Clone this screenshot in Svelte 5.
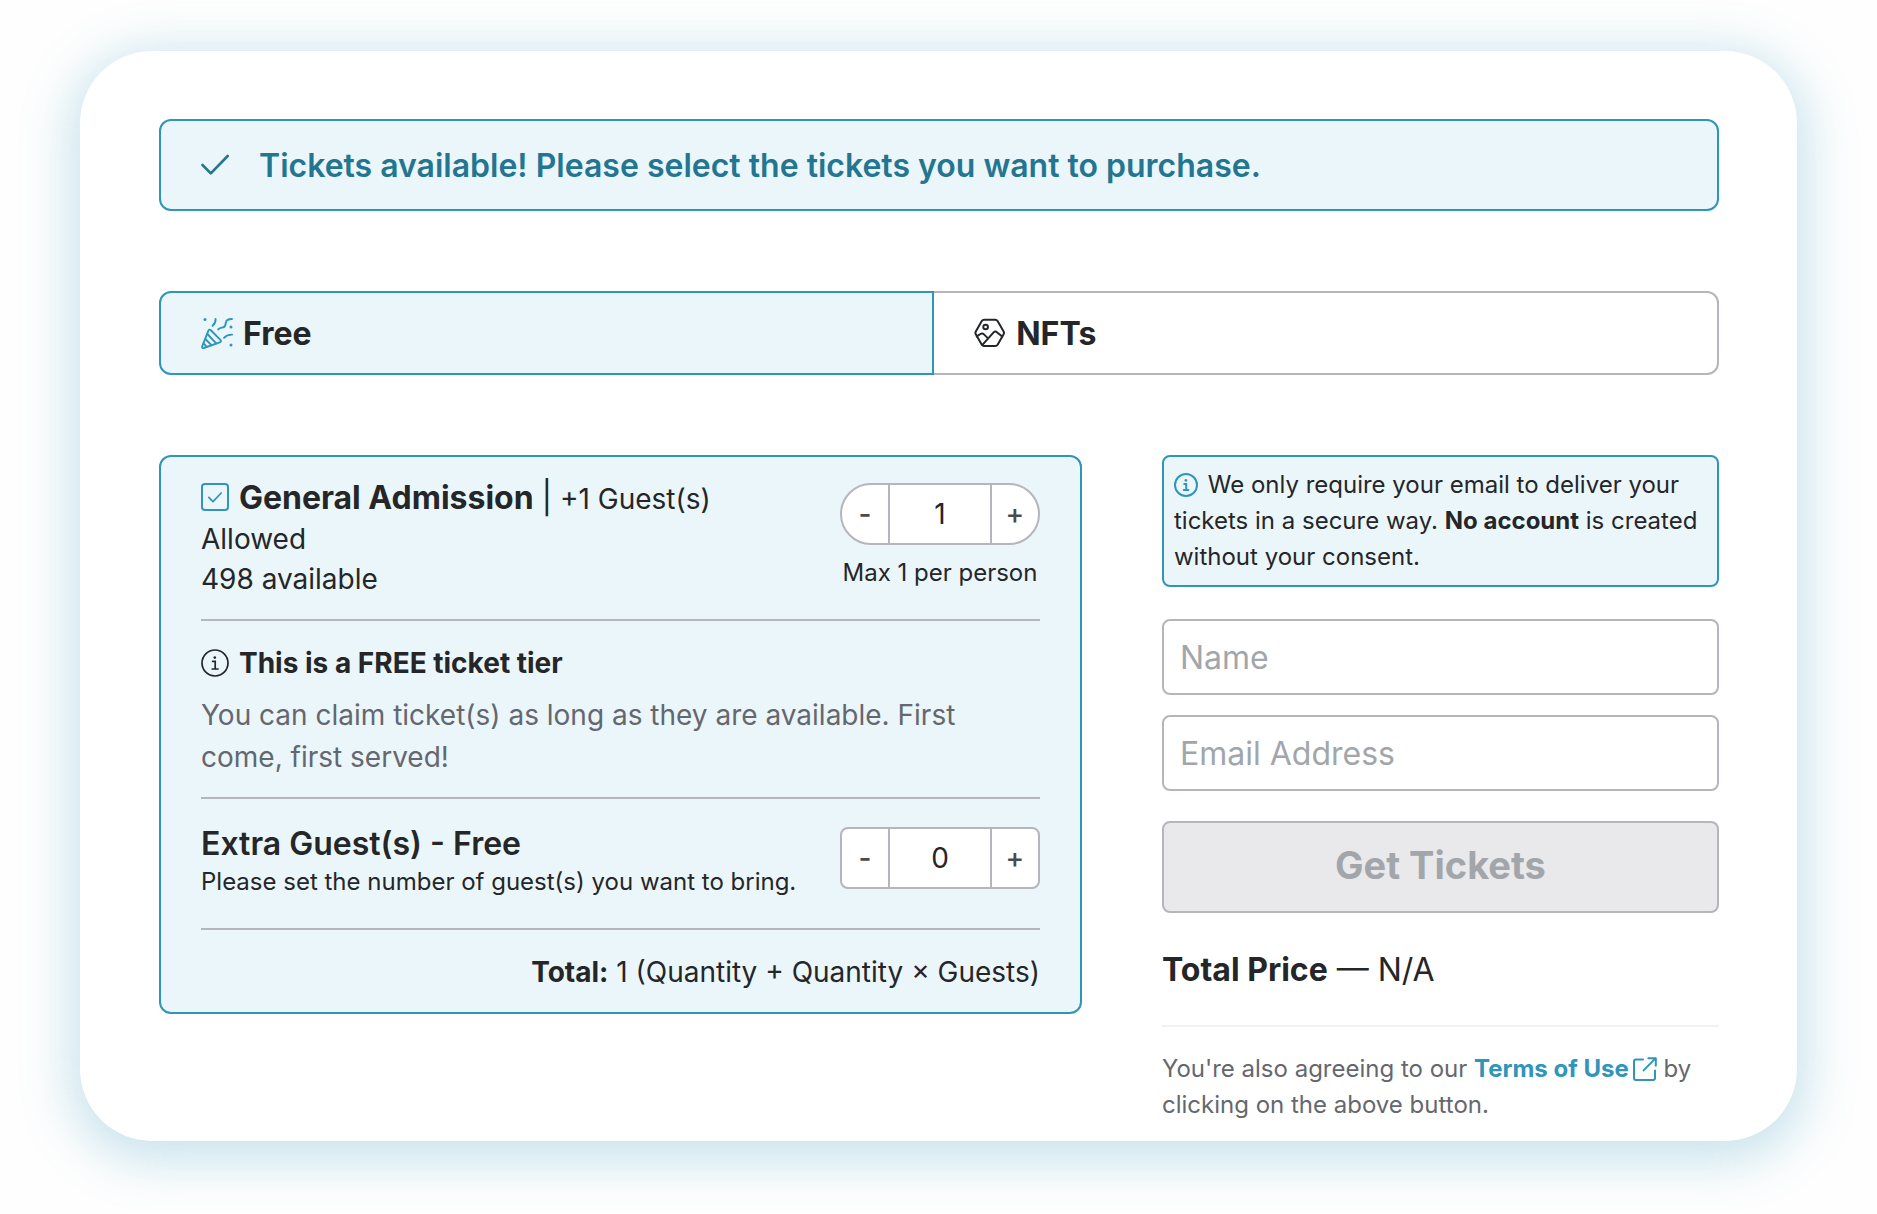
<script>
  let quantity = 1;
  let guests = 0;
  let name = "";
  let email = "";
  let selected = "Free";
  const available = 498;
  const maxPerPerson = 1;
  const maxGuests = 1;

  $: total = quantity + quantity * guests;
  $: ready = name.length > 0 && email.includes("@");

  function changeQuantity(step) {
    quantity = Math.min(maxPerPerson, Math.max(0, quantity + step));
  }
  function changeGuests(step) {
    guests = Math.min(maxGuests, Math.max(0, guests + step));
  }
</script>

<main class="panel">
  <div class="banner" role="status">
    <svg class="icon-md" viewBox="0 0 28 28" fill="none" stroke="currentColor" stroke-width="2.6" stroke-linecap="round" stroke-linejoin="round">
      <path d="M1.5 13 L9.8 21.4 L26.7 4" />
    </svg>
    <span>Tickets available! Please select the tickets you want to purchase.</span>
  </div>

  <div class="tabs" role="tablist">
    <button class="tab" class:active={selected == "Free"} role="tab" aria-selected={selected == "Free"} on:click={() => (selected = "Free")}>
      <svg class="icon-lg" viewBox="0 1 32 32" fill="none" stroke="currentColor" stroke-width="1.9" stroke-linecap="round" stroke-linejoin="round">
        <path d="M7.4 13.6 L1.2 29.4 Q0.8 31.4 2.8 31 L18.8 25.4 Q20.8 24.4 19.4 22.8 L9.6 13 Q8.2 12 7.4 13.6 Z" />
        <path d="M6.4 17 L15.2 26.4 M4.4 22 L10.4 28.2 M2.8 26.6 L5.6 29.6" />
        <path d="M14.6 2 Q14.8 6 11.6 8.8" />
        <path d="M31 2 Q25.4 2 24.8 5.6 Q24.6 10.6 20.8 10.6 Q18.4 10.8 17.2 12.4" />
        <path d="M31 17.6 Q26 17.4 23 20.8" />
        <g fill="currentColor" stroke="none">
          <circle cx="4" cy="2.6" r="1.5" />
          <circle cx="30" cy="10" r="1.5" />
          <circle cx="30" cy="28" r="1.5" />
        </g>
      </svg>
      <span>Free</span>
    </button>
    <button class="tab" class:active={selected == "NFTs"} role="tab" aria-selected={selected == "NFTs"} on:click={() => (selected = "NFTs")}>
      <svg class="icon-lg" viewBox="0 1 32 32" fill="none" stroke="currentColor" stroke-width="2" stroke-linecap="round" stroke-linejoin="round">
        <path d="M10 2.8 H21.4 Q22.8 2.8 23.6 4 L29.6 14.4 Q30.4 15.8 29.6 17.2 L23.6 27.8 Q22.8 29 21.4 29 H10 Q8.6 29 7.8 27.8 L1.8 17.2 Q1 15.8 1.8 14.4 L7.8 4 Q8.6 2.8 10 2.8 Z" />
        <circle cx="11.6" cy="10" r="2.3" />
        <path d="M2.8 19.4 L6.4 17 Q8.4 15.8 10 17.4 L14 21.4" />
        <path d="M8.4 27.8 L19.6 15.4 Q21.4 13.6 23.2 15.4 L28.2 19.6" />
      </svg>
      <span>NFTs</span>
    </button>
  </div>

  <div class="columns">
    <section class="card">
      <div class="row first">
        <div class="info">
          <svg class="icon-md checked" viewBox="0 0 28 28" fill="none" stroke="currentColor" stroke-width="2" stroke-linecap="round" stroke-linejoin="round">
            <rect x="1" y="1" width="26" height="26" rx="3" />
            <path stroke-width="1.7" d="M7.8 14.4 L12 18.6 L20.2 10" />
          </svg>
          <strong class="large">General Admission</strong>
          <span class="large">|</span> +1 Guest(s) Allowed<br />
          {available} available
        </div>
        <div class="quantity">
          <div class="stepper round">
            <button aria-label="Remove a ticket" on:click={() => changeQuantity(-1)}>-</button>
            <input aria-label="Tickets" inputmode="numeric" bind:value={quantity} />
            <button aria-label="Add a ticket" on:click={() => changeQuantity(1)}>+</button>
          </div>
          <div class="small limit">Max {maxPerPerson} per person</div>
        </div>
      </div>

      <div class="row tier">
        <div class="info">
          <h3>
            <svg class="icon-md" viewBox="0 0 28 28" fill="none" stroke="currentColor" stroke-width="1.7" stroke-linecap="round">
              <circle cx="14" cy="14" r="13" />
              <path d="M11.6 12.4 H14.2 V19.8 M11.2 20 H17" />
              <circle cx="13.8" cy="8.6" r="1.3" fill="currentColor" stroke="none" />
            </svg>
            This is a FREE ticket tier
          </h3>
          <p class="muted">You can claim ticket(s) as long as they are available. First come, first served!</p>
        </div>
      </div>

      <div class="row guests">
        <div class="info">
          <h2>Extra Guest(s) - Free</h2>
          <div class="small">Please set the number of guest(s) you want to bring.</div>
        </div>
        <div class="quantity">
          <div class="stepper">
            <button aria-label="Remove a guest" on:click={() => changeGuests(-1)}>-</button>
            <input aria-label="Extra guests" inputmode="numeric" bind:value={guests} />
            <button aria-label="Add a guest" on:click={() => changeGuests(1)}>+</button>
          </div>
        </div>
      </div>

      <div class="row total">
        <div><strong>Total:</strong> {total} (Quantity + Quantity × Guests)</div>
      </div>
    </section>

    <form class="checkout" on:submit|preventDefault>
      <div class="notice small">
        <svg class="icon-sm accent" viewBox="0 0 24 24" fill="none" stroke="currentColor" stroke-width="2" stroke-linecap="round">
          <circle cx="12" cy="12" r="11" />
          <path d="M10.2 11 H12.2 V16.6 M9.8 17 H14.4" />
          <circle cx="11.9" cy="7.4" r="1.4" fill="currentColor" stroke="none" />
        </svg>
        We only require your email to deliver your tickets in a secure way. <strong>No account</strong> is created without your consent.
      </div>
      <input class="field" type="text" placeholder="Name" aria-label="Name" bind:value={name} />
      <input class="field" type="email" placeholder="Email Address" aria-label="Email Address" bind:value={email} />
      <button class="submit" disabled={!ready}>Get Tickets</button>
      <div class="price"><strong>Total Price</strong> — N/A</div>
      <p class="terms small muted">
        You're also agreeing to our <a href="#terms">Terms of Use<svg class="icon-sm external" viewBox="0 0 24 24" fill="none" stroke="currentColor" stroke-width="2" stroke-linecap="round" stroke-linejoin="round"><path d="M10 2.6 H3 Q1 2.6 1 4.6 V21 Q1 23 3 23 H20 Q22 23 22 21 V13.6" /><path d="M10.6 13.4 L22.4 1.4 M15.4 1.2 H22.8 V8.8" /></svg></a> by clicking on the above button.
      </p>
    </form>
  </div>
</main>

<style>
  :global(body) {
    background: #fefefe;
  }
  .panel {
    --accent: #2f95b9;
    --tint: #ebf6fb;
    --grey: #b5b5bc;
    box-sizing: border-box;
    margin: 51px 80px 73px;
    padding: 68px 78px 18px 79px;
    border-radius: 72px;
    background: #fff;
    box-shadow: 0 10px 50px 10px rgba(47, 149, 185, 0.26);
    color: #242628;
    font: 28px/40px Inter, "Liberation Sans", sans-serif;
  }
  .panel :is(input, button) {
    box-sizing: border-box;
    margin: 0;
    color: inherit;
    font-family: inherit;
  }
  strong {
    font-weight: 700;
  }
  svg {
    flex: none;
  }
  .icon-sm {
    width: 24px;
    height: 24px;
    margin-right: 3px;
    vertical-align: -4px;
  }
  .icon-md {
    width: 28px;
    height: 28px;
    vertical-align: -2px;
  }
  .icon-lg {
    width: 32px;
    height: 32px;
  }
  .accent {
    color: var(--accent);
  }
  .checked {
    margin-right: 2px;
    color: var(--accent);
  }
  .muted {
    color: #65676f;
  }
  .large {
    font-size: 32px;
  }
  .small {
    font-size: 24px;
    line-height: 36px;
  }

  .banner {
    display: flex;
    align-items: center;
    gap: 30px;
    padding: 25px 40px 23px;
    border: 2px solid var(--accent);
    border-radius: 12px;
    background: var(--tint);
    color: #24758f;
    font-size: 32px;
    font-weight: 600;
  }

  .tabs {
    display: flex;
    margin: 80px 0;
  }
  .tab {
    display: flex;
    flex: 1 1 auto;
    align-items: center;
    gap: 10px;
    padding: 21px 40px 19px;
    border: 2px solid var(--grey);
    background: #fff;
    font-size: 32px;
    font-weight: 700;
    line-height: 40px;
    cursor: pointer;
  }
  .tab:first-child {
    border-radius: 12px 0 0 12px;
  }
  .tab:last-child {
    border-left: none;
    border-radius: 0 12px 12px 0;
  }
  .tab.active {
    border-color: var(--accent);
    background: var(--tint);
  }
  .tab.active svg {
    color: var(--accent);
  }

  .columns {
    display: grid;
    grid-template-columns: minmax(0, 1.657fr) minmax(0, 1fr);
    gap: 80px;
    align-items: start;
  }
  .card {
    padding: 0 40px;
    border: 2px solid var(--accent);
    border-radius: 12px;
    background: var(--tint);
  }
  .row {
    display: flex;
    gap: 40px;
    padding: 22px 0 20px;
  }
  .row + .row {
    border-top: 2px solid var(--grey);
  }
  .row.first {
    padding-top: 21px;
  }
  .row.tier {
    padding-bottom: 19px;
  }
  .row.guests {
    padding: 25px 0 28px;
  }
  .row.total {
    justify-content: flex-end;
  }
  .info {
    flex: 1;
    min-width: 0;
  }
  h2,
  h3 {
    margin: 0;
    font-size: 32px;
    font-weight: 600;
    line-height: 40px;
  }
  h3 {
    display: flex;
    align-items: center;
    gap: 10px;
    font-size: 28px;
    font-weight: 700;
  }
  .tier p {
    margin: 11px 0 0;
    line-height: 42px;
  }

  .quantity {
    flex: none;
    margin-top: 5px;
    text-align: center;
  }
  .guests .quantity {
    margin-top: 3px;
  }
  .stepper {
    display: flex;
    width: 200px;
    height: 62px;
    box-sizing: border-box;
    overflow: hidden;
    border: 2px solid var(--grey);
    border-radius: 8px;
    background: #fff;
  }
  .stepper.round {
    border-radius: 31px;
  }
  .stepper button {
    flex: 1;
    padding: 0;
    border: none;
    background: none;
    color: #4a4a4f;
    font-size: 28px;
    font-weight: 500;
    cursor: pointer;
  }
  .stepper input {
    width: 104px;
    padding: 0;
    border: solid var(--grey);
    border-width: 0 2px;
    border-radius: 0;
    background: none;
    font-size: 28px;
    text-align: center;
  }
  .limit {
    margin-top: 10px;
  }

  .checkout {
    display: flex;
    flex-direction: column;
  }
  .notice {
    margin-bottom: 32px;
    padding: 10px;
    border: 2px solid var(--accent);
    border-radius: 8px;
    background: var(--tint);
  }
  .field {
    width: 100%;
    height: 76px;
    padding: 0 16px;
    border: 2px solid var(--grey);
    border-radius: 8px;
    background: #fff;
    font-size: 32px;
  }
  .field + .field {
    margin-top: 20px;
  }
  .field::placeholder {
    color: #a2a6ab;
    opacity: 1;
  }
  .panel .submit {
    height: 92px;
    margin: 30px 0 37px;
    padding: 0 0 4px;
    border: 2px solid var(--grey);
    border-radius: 8px;
    background: var(--accent);
    color: #fff;
    font-size: 38px;
    font-weight: 700;
  }
  .panel .submit:disabled {
    background: #e9e9eb;
    color: #a2a6ab;
  }
  .price {
    font-size: 32px;
  }
  .terms {
    margin: 35px 0 0;
    padding-top: 24px;
    border-top: 2px solid #f1f1f2;
  }
  .terms a {
    color: var(--accent);
    font-weight: 700;
    text-decoration: none;
  }
  .external {
    margin: 0 0 0 4px;
  }
</style>
